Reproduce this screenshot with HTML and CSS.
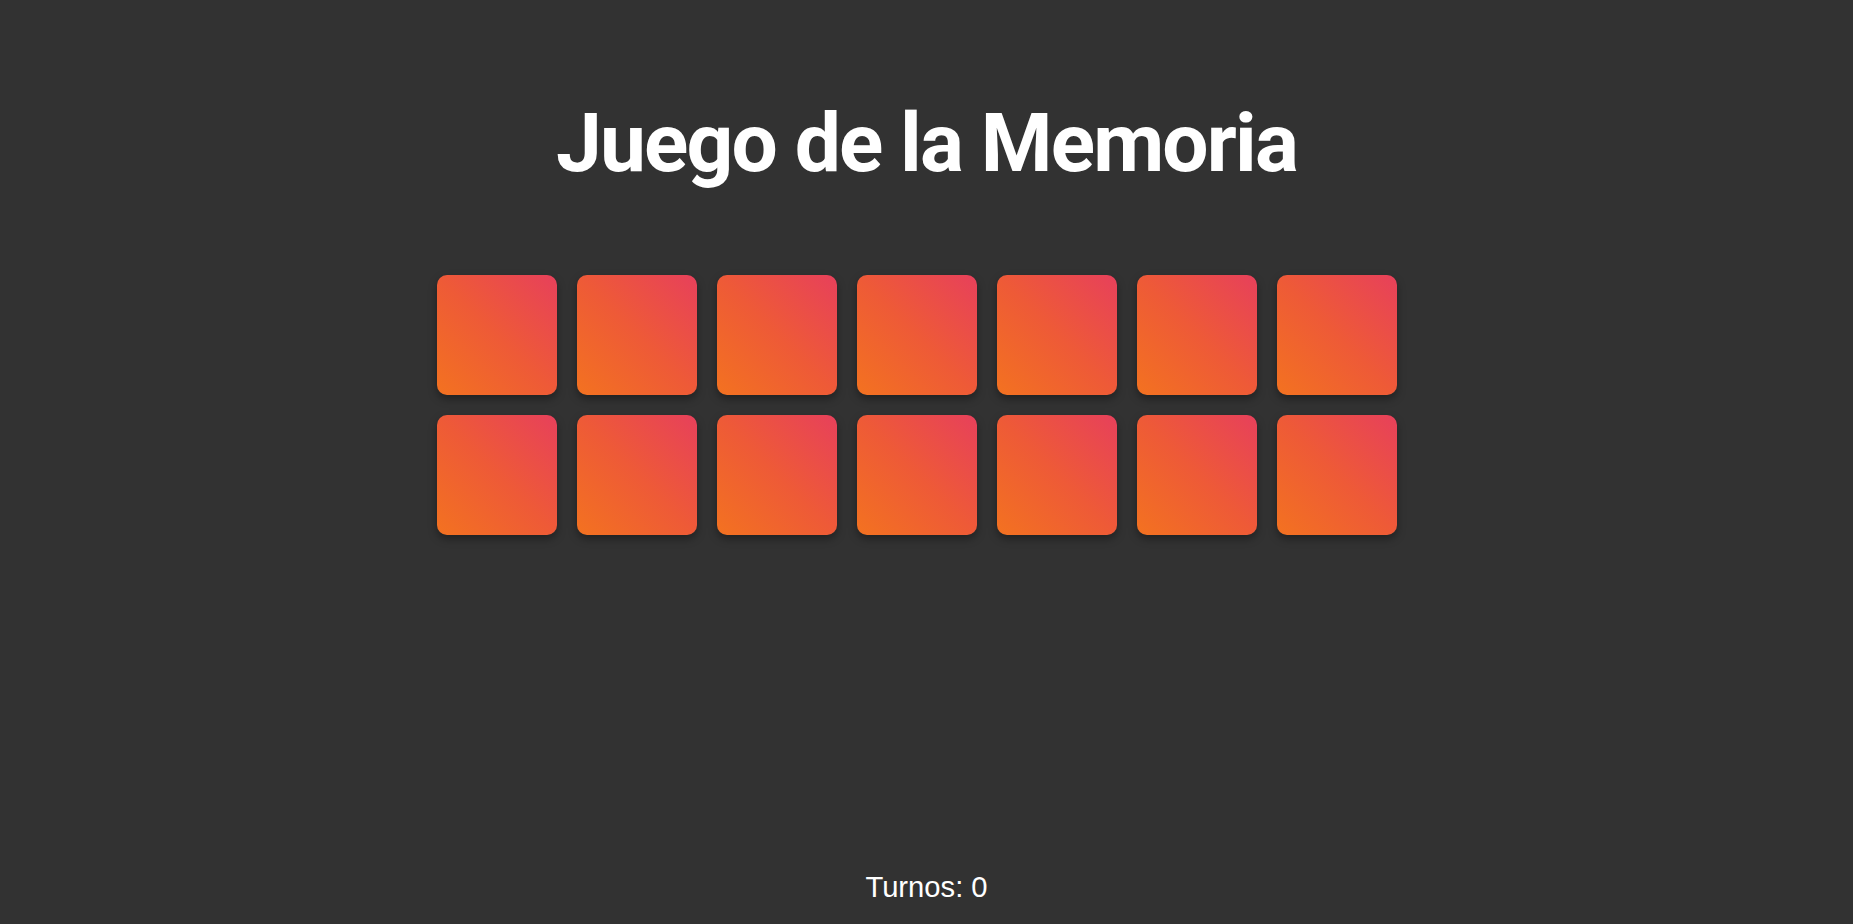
FILE: index.html
```html
<!DOCTYPE html>
<html lang="es">
<head>
<meta charset="utf-8">
<title>Juego de la Memoria</title>
<link rel="stylesheet" href="styles.css">
</head>
<body>
<main class="app">
  <h1 class="title">Juego de la Memoria</h1>
  <div class="board">
    <div class="card"></div><div class="card"></div><div class="card"></div><div class="card"></div><div class="card"></div><div class="card"></div><div class="card"></div>
    <div class="card"></div><div class="card"></div><div class="card"></div><div class="card"></div><div class="card"></div><div class="card"></div><div class="card"></div>
  </div>
  <p class="turns">Turnos: 0</p>
</main>
</body>
</html>
```

FILE: styles.css
```css
html, body {
  margin: 0;
  padding: 0;
  background: #323232;
  color: #ffffff;
}

.app {
  height: 100vh;
  display: flex;
  flex-direction: column;
  align-items: center;
  box-sizing: border-box;
  padding-top: 95px;
  padding-bottom: 20px;
  overflow: hidden;
}

.title {
  margin: 0;
  font-family: Roboto, "Liberation Sans", sans-serif;
  font-weight: 700;
  font-size: 82px;
  line-height: 96px;
  letter-spacing: -1.8px;
  text-align: center;
}

.board {
  width: 1000px;
  margin-top: 74px;
  display: flex;
  flex-wrap: wrap;
}

.card {
  width: 120px;
  height: 120px;
  margin: 10px;
  border-radius: 10px;
  background: linear-gradient(45deg, #f37220 0%, #ee5a37 50%, #e7405b 100%);
  box-shadow: 0 4px 8px rgba(0, 0, 0, 0.35);
}

.turns {
  margin: auto 0 0 0;
  font-family: "Liberation Sans", Arial, sans-serif;
  font-size: 29.2px;
  line-height: 33px;
}
```
